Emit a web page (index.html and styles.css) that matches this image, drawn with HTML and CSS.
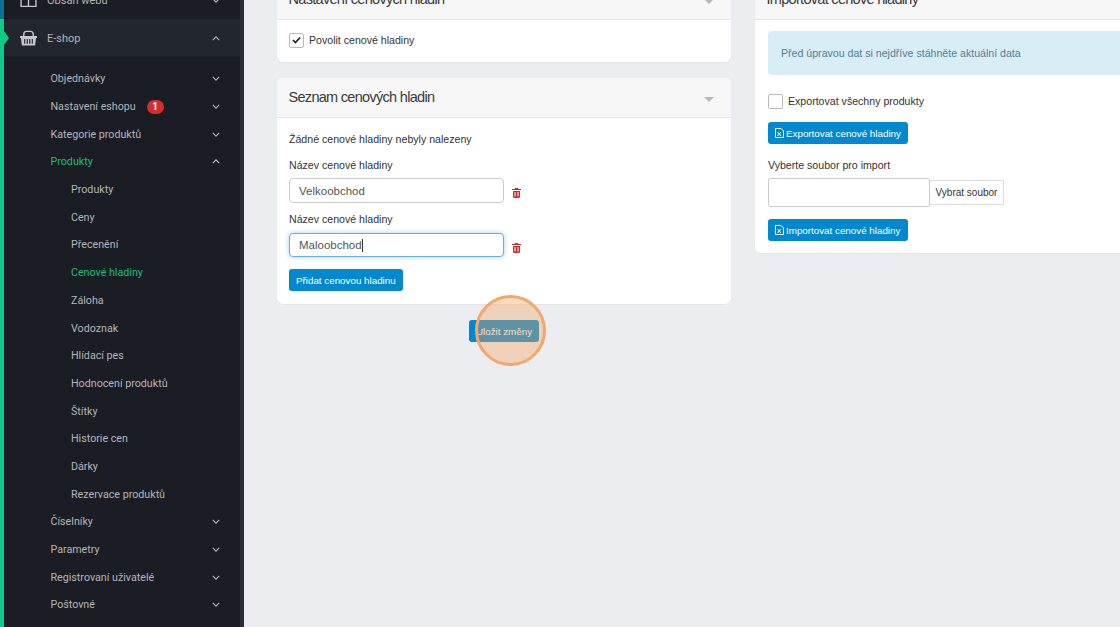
FILE: index.html
```html
<!DOCTYPE html>
<html lang="cs">
<head>
<meta charset="utf-8">
<title>Cenové hladiny</title>
<link rel="stylesheet" href="styles.css">
</head>
<body>
<svg class="defs" width="0" height="0">
  <symbol id="down" viewBox="0 0 10 6"><path d="M1 1l4 4 4-4" fill="none" stroke="currentColor" stroke-width="1.4"/></symbol>
  <symbol id="up" viewBox="0 0 10 6"><path d="M1 5l4-4 4 4" fill="none" stroke="currentColor" stroke-width="1.4"/></symbol>
  <symbol id="trash" viewBox="0 0 9 10"><path d="M3 0h3l.5 1H9v1H0V1h2.500zM1 3h7v6.200l-.8.8H1.800L1 9.200zM2.500 4v4.500h1V4zm3 0v4.500h1V4z" fill="currentColor"/></symbol>
  <symbol id="xls" viewBox="0 0 9 10"><path d="M.5.500h5.500l2.500 2.500v6.500h-8z" fill="none" stroke="currentColor"/><path d="M2.500 4l3.500 4M6 4L2.500 8" fill="none" stroke="currentColor"/></symbol>
</svg>
<div class="layout">
  <aside class="sidebar">
    <div class="top-row">
      <svg class="nav-icon" viewBox="0 0 16 14"><path d="M1 1h14v12H1zM8 1v12M1 4h14" fill="none" stroke="currentColor" stroke-width="1.300"/></svg>
      <span class="top-label">Obsah webu</span>
      <svg class="chev"><use href="#down"/></svg>
    </div>
    <div class="top-row active">
      <svg class="nav-icon" viewBox="0 0 18 16"><path d="M4 6V4q0-3 3-3h4q3 0 3 3v2" fill="none" stroke="currentColor" stroke-width="1.500"/><path d="M0 6h18v2h-1l-1 8H2L1 8H0z" fill="currentColor"/><path d="M5 9v5M7.700 9v5M10.300 9v5M13 9v5" stroke="#22262d" stroke-width="1.200"/></svg>
      <span class="top-label">E-shop</span>
      <svg class="chev"><use href="#up"/></svg>
    </div>
    <nav class="submenu">
      <a class="item">Objednávky<svg class="chev"><use href="#down"/></svg></a>
      <a class="item">Nastavení eshopu<span class="badge">1</span><svg class="chev"><use href="#down"/></svg></a>
      <a class="item">Kategorie produktů<svg class="chev"><use href="#down"/></svg></a>
      <a class="item current">Produkty<svg class="chev light"><use href="#up"/></svg></a>
      <a class="item sub">Produkty</a>
      <a class="item sub">Ceny</a>
      <a class="item sub">Přecenění</a>
      <a class="item sub current">Cenové hladiny</a>
      <a class="item sub">Záloha</a>
      <a class="item sub">Vodoznak</a>
      <a class="item sub">Hlídací pes</a>
      <a class="item sub">Hodnocení produktů</a>
      <a class="item sub">Štítky</a>
      <a class="item sub">Historie cen</a>
      <a class="item sub">Dárky</a>
      <a class="item sub">Rezervace produktů</a>
      <a class="item">Číselníky<svg class="chev"><use href="#down"/></svg></a>
      <a class="item">Parametry<svg class="chev"><use href="#down"/></svg></a>
      <a class="item">Registrovaní uživatelé<svg class="chev"><use href="#down"/></svg></a>
      <a class="item">Poštovné<svg class="chev"><use href="#down"/></svg></a>
    </nav>
  </aside>
  <main class="main">
    <div class="column">
      <section class="panel">
        <header class="panel-head"><h2>Nastavení cenových hladin</h2><i class="caret"></i></header>
        <div class="panel-body settings">
          <label class="check"><span class="box"><svg viewBox="0 0 10 8" width="9" height="8"><path d="M1 4l2.800 2.800L9 1.200" fill="none" stroke="#222" stroke-width="1.900"/></svg></span>Povolit cenové hladiny</label>
        </div>
      </section>
      <section class="panel">
        <header class="panel-head"><h2>Seznam cenových hladin</h2><i class="caret"></i></header>
        <div class="panel-body levels">
          <p class="empty">Žádné cenové hladiny nebyly nalezeny</p>
          <label class="field-label">Název cenové hladiny</label>
          <div class="field-row">
            <div class="input">Velkoobchod</div>
            <svg class="trash"><use href="#trash"/></svg>
          </div>
          <label class="field-label">Název cenové hladiny</label>
          <div class="field-row focused">
            <div class="input focus">Maloobchod<span class="cursor"></span></div>
            <svg class="trash"><use href="#trash"/></svg>
          </div>
          <button class="btn add">Přidat cenovou hladinu</button>
        </div>
      </section>
      <div class="save-row">
        <button class="btn save">Uložit změny<span class="spot"></span></button>
      </div>
    </div>
    <div class="column wide">
      <section class="panel">
        <header class="panel-head"><h2>Importovat cenové hladiny</h2></header>
        <div class="panel-body import">
          <div class="alert">Před úpravou dat si nejdříve stáhněte aktuální data</div>
          <label class="check export"><span class="box"></span>Exportovat všechny produkty</label>
          <button class="btn file"><svg class="xls"><use href="#xls"/></svg>Exportovat cenové hladiny</button>
          <label class="field-label pick">Vyberte soubor pro import</label>
          <div class="file-row"><div class="file-name"></div><button class="file-btn">Vybrat soubor</button></div>
          <button class="btn file"><svg class="xls"><use href="#xls"/></svg>Importovat cenové hladiny</button>
        </div>
      </section>
    </div>
  </main>
</div>
</body>
</html>
```
FILE: styles.css
```css
* { box-sizing: border-box; }
html, body { margin: 0; height: 100%; overflow: hidden; }
body { background: #ecedf1; font-family: "Liberation Sans", Arial, sans-serif; font-size: 10.6px; color: #333; }
.defs { position: absolute; }
.layout { display: flex; height: 627px; overflow: hidden; }

.sidebar { width: 244px; flex: none; background: #1a1d23; border-right: 4px solid #2a2e35; margin-top: -19px; color: #b3b6bb; font-family: Roboto, sans-serif; font-size: 10.7px; }
.top-row { height: 38px; display: flex; align-items: center; border-left: 4px solid #0b6f9c; padding-right: 20px; position: relative; font-size: 11px; }
.top-row.active { background: #22262d; border-left-color: #0fcb83; box-shadow: inset 0 -1px 0 #1d2026; }
.top-row.active::before { content: ""; position: absolute; left: 0; top: 12px; border-left: 5px solid #0fcb83; border-top: 7px solid transparent; border-bottom: 7px solid transparent; }
.nav-icon { width: 17px; height: 16px; margin-left: 16px; color: #c4c7cb; flex: none; }
.top-label { margin-left: 10px; flex: 1; }
.chev { width: 8px; height: 5px; flex: none; color: #b3b6bb; margin-left: auto; }
.submenu { border-left: 4px solid #0fcb83; padding-top: 8px; height: 600px; }
.item { height: 27.7px; display: flex; align-items: center; padding: 0 20px 0 46.500px; }
.item.sub { padding-left: 67px; }
.item.current { color: #1fbd78; }
.chev.light { color: #c4c7cb; }
.badge { background: #d32f2f; color: #fff; font-size: 10px; font-weight: 700; width: 17px; height: 14px; border-radius: 7px; margin-left: 11px; display: flex; align-items: center; justify-content: center; }

.main { flex: 1; min-width: 0; display: flex; gap: 24px; padding-left: 33px; margin-top: -20px; align-items: flex-start; overflow: hidden; height: 647px; }
.column { width: 454px; flex: none; display: flex; flex-direction: column; gap: 16px; }
.column.wide { width: 400px; }
.panel { background: #fff; border-radius: 6px; box-shadow: 0 1px 1px rgba(0,0,0,.04); }
.panel-head { height: 40px; background: #f7f7f7; border-bottom: 1px solid #e7e7e7; border-radius: 6px 6px 0 0; display: flex; align-items: center; justify-content: space-between; padding: 0 17px 2px 11.500px; }
.panel-head h2 { margin: 0; font-size: 14.500px; font-weight: 400; letter-spacing: -.7px; color: #3a3a3a; }
.caret { border-top: 5px solid #b9b9b9; border-left: 5px solid transparent; border-right: 5px solid transparent; margin-top: 6px; }

.panel-body { padding: 12px; }
.settings { height: 42px; }
.check { display: flex; align-items: center; gap: 5px; height: 16px; }
.box { width: 15px; height: 15px; border: 1px solid #bbb; border-radius: 2px; background: #fff; display: flex; align-items: center; justify-content: center; }
.levels { height: 186px; padding-top: 15px; }
.empty { margin: 0; line-height: 13px; }
.field-label { display: block; line-height: 13px; }
.levels .empty + .field-label { margin-top: 13px; }
.field-row { display: flex; align-items: center; gap: 8px; margin: 6px 0 10px; }
.field-row.focused { margin-top: 7px; }
.input { width: 215px; height: 25px; border: 1px solid #ccc; border-radius: 4px; padding: 0 9px; display: flex; align-items: center; color: #555; background: #fff; font-size: 11.500px; }
.input.focus { border-color: #66afe9; box-shadow: 0 0 5px rgba(102,175,233,.6); height: 24px; }
.cursor { width: 1px; height: 13px; background: #333; }
.trash { width: 9px; height: 10px; color: #c9302c; margin-top: 5px; }
.btn { background: #0288cf; color: #fff; border: 0; border-radius: 3px; height: 22px; font-family: "Liberation Sans", Arial, sans-serif; font-size: 9.800px; padding: 0 7px; display: flex; align-items: center; }
.add { width: 114px; margin-top: 12px; white-space: nowrap; }
.save-row { display: flex; justify-content: center; }
.save { position: relative; width: 70px; white-space: nowrap; }
.spot { position: absolute; left: 6px; top: -25px; width: 71px; height: 71px; border-radius: 50%; background: rgba(244,164,96,.38); border: 3px solid #f2a868; }

.import { padding: 11px 13px; height: 233px; }
.alert { background: #d9edf7; border-radius: 4px; height: 44px; padding: 0 13px; display: flex; align-items: center; color: #4f7f98; }
.export { margin: 18px 0 13px; }
.file { width: 140px; gap: 2px; white-space: nowrap; padding: 0 7px; }
.xls { width: 9px; height: 10px; flex: none; }
.pick { margin: 15px 0 6px; }
.file-row { display: flex; align-items: center; margin-bottom: 12px; }
.file-name { width: 162px; height: 29px; border: 1px solid #ccc; border-radius: 2px; background: #fff; }
.file-btn { width: 74px; height: 25px; border: 1px solid #ddd; background: #fff; color: #333; font-family: "Liberation Sans", Arial, sans-serif; font-size: 10px; padding: 0; border-left: 0; }
```
